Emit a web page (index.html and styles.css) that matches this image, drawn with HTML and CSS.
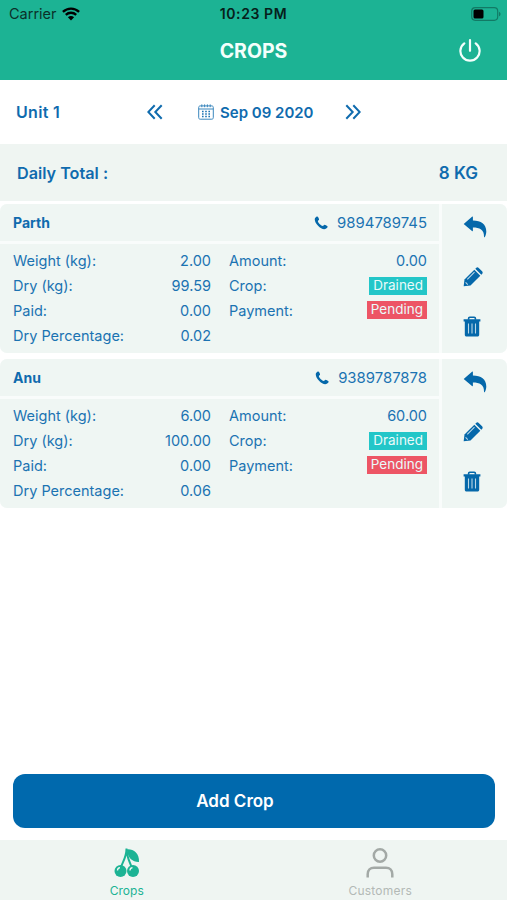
FILE: index.html
```html
<!DOCTYPE html>
<html lang="en">
<head>
  <meta charset="UTF-8" />
  <meta name="viewport" content="width=device-width, initial-scale=1.0" />
  <title>Crops</title>
  <link rel="stylesheet" href="styles.css">
</head>
<body>
  <svg class="defs" width="0" height="0">
    <symbol id="phone" viewBox="0 0 14 14">
      <path d="M1 2.2C1.800 1 2.800.3 3.400.5c.8.5 1.600 2 1.700 3 0 .7-1.300 1-1.200 1.700.3 1.600 3.200 4.500 4.900 4.800.7.1 1.100-1.200 1.800-1.200 1 .1 2.600 1 3 1.700.2.700-.6 1.600-1.800 2.300C8 15.200-.8 6.500 1 2.200z"/>
    </symbol>
    <symbol id="reply" viewBox="0 0 24 22">
      <path d="M.7 8 9 .8c.5-.4.9-.2.9.5v3.200C18 4.700 23.300 8 23.300 15.500c0 2.200-.7 4.300-1.500 5.500-.4.5-.9.4-.8-.3C21.300 14 16.500 11.600 9.900 11.600v3c0 .7-.4.9-.9.5z"/>
    </symbol>
    <symbol id="pencil" viewBox="0 0 20 20">
      <path d="M.7 19.300l.8-6.800L11.300 2.700l6 6L7.500 18.500z"/>
      <path d="M12.300 1.700l.8-.8c.8-.8 1.800-.8 2.600 0l3.400 3.400c.8.8.8 1.800 0 2.600l-.8.800z"/>
      <path class="cut" d="M4.300 12.300l7.200-7.100M2.600 15.400l2.200 2.200"/>
    </symbol>
    <symbol id="trash" viewBox="0 0 18 21">
      <path class="line" d="M5.600 3.700V2.500c0-.7.4-1.200 1.200-1.200h4.400c.8 0 1.200.5 1.200 1.200v1.200"/>
      <path d="M.6 3.200h16.800v2.300H.6zM1.800 5h14.400v13.700c0 1.100-.7 1.800-1.800 1.800H3.600c-1.100 0-1.800-.7-1.800-1.800z"/>
      <path class="cut" d="M5.500 7.500v10M9 7.500v10M12.500 7.500v10"/>
    </symbol>
  </svg>

  <header class="header">
    <div class="status">
      <div class="carrier">
        <span>Carrier</span>
        <svg width="18" height="14" viewBox="0 0 18 14">
          <path class="wave" d="M.9 4.900C5.500.4 12.500.4 17.100 4.900M3.800 7.900c3-2.900 7.400-2.900 10.400 0"/>
          <path d="M9 13.600 5.900 10.300c1.800-1.700 4.400-1.700 6.200 0z"/>
        </svg>
      </div>
      <span class="time">10:23 PM</span>
      <svg class="battery" width="30" height="14" viewBox="0 0 30 14">
        <rect class="shell" x=".7" y=".7" width="26" height="12.600" rx="3.500"/>
        <rect x="2.500" y="2.500" width="10" height="9" rx="1.500"/>
        <path class="cap" d="M28 4.700c2 .8 2 3.800 0 4.600z"/>
      </svg>
    </div>
    <div class="title-bar">
      <h1>CROPS</h1>
      <svg class="power" width="22" height="24" viewBox="0 0 22 24">
        <path d="M11 1.200v10.600M5.300 4.300a9.600 9.600 0 1 0 11.400 0"/>
      </svg>
    </div>
  </header>

  <div class="date-bar">
    <span class="unit">Unit 1</span>
    <svg class="chevrons" width="16" height="16" viewBox="0 0 16 16"><path d="M7.700 1.200 1.300 8l6.400 6.800M14.700 1.200 8.300 8l6.400 6.800"/></svg>
    <div class="date">
      <svg width="16" height="16" viewBox="0 0 16 16">
        <path class="frame" d="M2.200 1.900h11.600c.9 0 1.500.6 1.500 1.500v10.300c0 .9-.6 1.500-1.500 1.500H2.200c-.9 0-1.500-.6-1.500-1.500V3.400c0-.9.6-1.500 1.500-1.500zM.7 5h14.600M3.800.4v2.800M6.600.4v2.800M9.400.4v2.800M12.200.4v2.800"/>
        <path class="dots" d="M4 7.500h8.400M4 10h8.400M4 12.500h8.400"/>
      </svg>
      <span>Sep 09 2020</span>
    </div>
    <svg class="chevrons" width="16" height="16" viewBox="0 0 16 16"><path d="M1.300 1.200 7.700 8l-6.400 6.800M8.300 1.200 14.700 8l-6.400 6.800"/></svg>
  </div>

  <div class="total">
    <span>Daily Total :</span>
    <span class="total-value">8 KG</span>
  </div>

  <main class="list">
    <section class="card">
      <div class="info">
        <div class="person">
          <h2>Parth</h2>
          <div class="phone"><svg width="14" height="14"><use href="#phone"/></svg><span>9894789745</span></div>
        </div>
        <div class="details">
          <div class="col">
            <div class="row"><span>Weight (kg):</span><span>2.00</span></div>
            <div class="row"><span>Dry (kg):</span><span>99.59</span></div>
            <div class="row"><span>Paid:</span><span>0.00</span></div>
            <div class="row"><span>Dry Percentage:</span><span>0.02</span></div>
          </div>
          <div class="col">
            <div class="row"><span>Amount:</span><span>0.00</span></div>
            <div class="row"><span>Crop:</span><span class="badge drained">Drained</span></div>
            <div class="row"><span>Payment:</span><span class="badge pending">Pending</span></div>
          </div>
        </div>
      </div>
      <div class="actions">
        <svg width="24" height="22"><use href="#reply"/></svg>
        <svg width="20" height="20"><use href="#pencil"/></svg>
        <svg width="18" height="21"><use href="#trash"/></svg>
      </div>
    </section>

    <section class="card">
      <div class="info">
        <div class="person">
          <h2>Anu</h2>
          <div class="phone"><svg width="14" height="14"><use href="#phone"/></svg><span>9389787878</span></div>
        </div>
        <div class="details">
          <div class="col">
            <div class="row"><span>Weight (kg):</span><span>6.00</span></div>
            <div class="row"><span>Dry (kg):</span><span>100.00</span></div>
            <div class="row"><span>Paid:</span><span>0.00</span></div>
            <div class="row"><span>Dry Percentage:</span><span>0.06</span></div>
          </div>
          <div class="col">
            <div class="row"><span>Amount:</span><span>60.00</span></div>
            <div class="row"><span>Crop:</span><span class="badge drained">Drained</span></div>
            <div class="row"><span>Payment:</span><span class="badge pending">Pending</span></div>
          </div>
        </div>
      </div>
      <div class="actions">
        <svg width="24" height="22"><use href="#reply"/></svg>
        <svg width="20" height="20"><use href="#pencil"/></svg>
        <svg width="18" height="21"><use href="#trash"/></svg>
      </div>
    </section>
  </main>

  <button class="add-button">Add Crop</button>

  <nav class="tabs">
    <div class="tab active">
      <svg width="28" height="32" viewBox="0 0 28 32">
        <path class="stem" d="M13.500 1.500C13.500 10 10 14.500 8 20M13.800 4c.3 6.500 3 11 4.700 16"/>
        <path d="M13.200 2.500c6.500-1 13.500 3.500 12.800 12.500-6 .3-11-4-11.500-10z"/>
        <circle cx="7.500" cy="24" r="6"/>
        <circle cx="20" cy="24" r="6"/>
        <path class="shine" d="M4.500 23.500c0-1.600 1-2.600 2.500-2.800M17 23.500c0-1.600 1-2.600 2.500-2.800"/>
      </svg>
      <span>Crops</span>
    </div>
    <div class="tab">
      <svg width="28" height="32" viewBox="0 0 28 32">
        <circle class="person-line" cx="14" cy="8.500" r="6.200"/>
        <path class="person-line" d="M1.700 30.500v-3.300c0-4 2.600-6.400 6.300-6.400h12c3.700 0 6.300 2.400 6.300 6.400v3.300"/>
      </svg>
      <span class="customers">Customers</span>
    </div>
  </nav>
</body>
</html>
```
FILE: styles.css
```css
* {
  box-sizing: border-box;
}
body {
  margin: 0;
  height: 900px;
  display: flex;
  flex-direction: column;
  font-family: Inter, "Liberation Sans", sans-serif;
  font-size: 14.5px;
  color: #1b73b2;
  background: #fff;
  overflow: hidden;
}
svg {
  display: block;
  flex: none;
}
.defs {
  position: absolute;
}
.header {
  height: 80px;
  background: #1cb394;
}
.status {
  display: grid;
  grid-template-columns: 1fr auto 1fr;
  align-items: center;
  height: 27px;
  padding: 0 6px 0 9px;
  color: #0b3029;
}
.carrier {
  display: flex;
  align-items: center;
  gap: 5px;
}
.carrier svg {
  fill: #000;
}
.wave {
  fill: none;
  stroke: #000;
  stroke-width: 2.3;
}
.time {
  margin-right: 3px;
  font-size: 14px;
  font-weight: 600;
  letter-spacing: 0.6px;
  color: #06201b;
}
.battery {
  justify-self: end;
}
.shell {
  fill: none;
  stroke: #127a65;
  stroke-width: 1.2;
}
.cap {
  fill: #127a65;
}
.title-bar {
  display: grid;
  grid-template-columns: 1fr auto 1fr;
  align-items: center;
  height: 47px;
  padding: 0 26px;
}
h1 {
  grid-column: 2;
  margin: 0;
  font-size: 19.5px;
  font-weight: 700;
  color: #f4fffc;
}
.power {
  justify-self: end;
  fill: none;
  stroke: #f4fffc;
  stroke-width: 2.2;
  stroke-linecap: round;
}
.date-bar {
  display: flex;
  align-items: center;
  height: 64px;
  padding-left: 16px;
  font-size: 16px;
  font-weight: 600;
  letter-spacing: 0.3px;
  color: #0f6bae;
}
.unit {
  width: 131px;
}
.chevrons {
  fill: none;
  stroke: #0f6bae;
  stroke-width: 2;
}
.date {
  display: flex;
  align-items: center;
  gap: 6px;
  width: 182px;
  padding-left: 35px;
  font-size: 15px;
  letter-spacing: 0;
  white-space: nowrap;
}
.frame {
  fill: none;
  stroke: #3b87bd;
}
.dots {
  fill: none;
  stroke: #1b73b2;
  stroke-width: 1.6;
  stroke-dasharray: 1.6 1.6;
}
.total {
  display: flex;
  align-items: center;
  justify-content: space-between;
  height: 57px;
  padding: 0 29px 0 17px;
  font-size: 16.2px;
  font-weight: 600;
  color: #0f6bae;
  background: #eff5f2;
}
.total-value {
  font-size: 17px;
}
.list {
  display: flex;
  flex-direction: column;
  gap: 6px;
  padding-top: 3px;
}
.card {
  display: flex;
  gap: 3px;
  height: 149px;
  border-radius: 7px;
  overflow: hidden;
  background: #f9fcfb;
}
.info {
  width: 439px;
}
.person {
  display: flex;
  align-items: center;
  justify-content: space-between;
  height: 37px;
  padding: 0 12px 0 13px;
  background: #eff6f3;
}
h2 {
  margin: 0;
  font-size: 14px;
  font-weight: 700;
  color: #0f6bae;
}
.phone {
  display: flex;
  align-items: center;
  gap: 9px;
  font-size: 14.9px;
}
.phone svg,
.actions svg {
  fill: #0568aa;
}
.details {
  display: grid;
  grid-template-columns: 198px 198px;
  gap: 18px;
  height: 109px;
  margin-top: 3px;
  padding: 4.500px 0 0 13px;
  background: #eff6f3;
}
.row {
  display: flex;
  align-items: center;
  justify-content: space-between;
  height: 24.800px;
}
.badge {
  height: 18px;
  padding: 0 4px;
  font-size: 13.500px;
  line-height: 17px;
  color: #eafafa;
}
.drained {
  background: #23c6c8;
}
.pending {
  background: #ed5565;
}
.actions {
  display: flex;
  flex-direction: column;
  align-items: flex-start;
  flex: 1;
  gap: 29px;
  padding: 12px 0 0 20.500px;
  background: #eff6f3;
}
.cut {
  fill: none;
  stroke: #b9d6e6;
  stroke-width: 1.1;
}
.line {
  fill: none;
  stroke: #0568aa;
  stroke-width: 1.6;
}
.add-button {
  height: 54px;
  margin: auto 12px 12px 13px;
  padding: 0 38px 0 0;
  border: none;
  border-radius: 12px;
  font-family: inherit;
  font-size: 17px;
  font-weight: 600;
  color: #fff;
  background: #0069ad;
}
.tabs {
  display: grid;
  grid-template-columns: 1fr 1fr;
  height: 60px;
  background: #eff5f2;
}
.tab {
  display: flex;
  flex-direction: column;
  align-items: center;
  gap: 4px;
  padding-top: 7px;
  font-size: 12px;
  color: #b3b9b6;
}
.active {
  fill: #1cb394;
  color: #1cb394;
}
.customers {
  letter-spacing: 0.2px;
}
.stem {
  fill: none;
  stroke: #1cb394;
  stroke-width: 2;
}
.shine {
  fill: none;
  stroke: #eff5f2;
  stroke-width: 1.3;
}
.person-line {
  fill: none;
  stroke: #a3a9a6;
  stroke-width: 2.5;
}
```
